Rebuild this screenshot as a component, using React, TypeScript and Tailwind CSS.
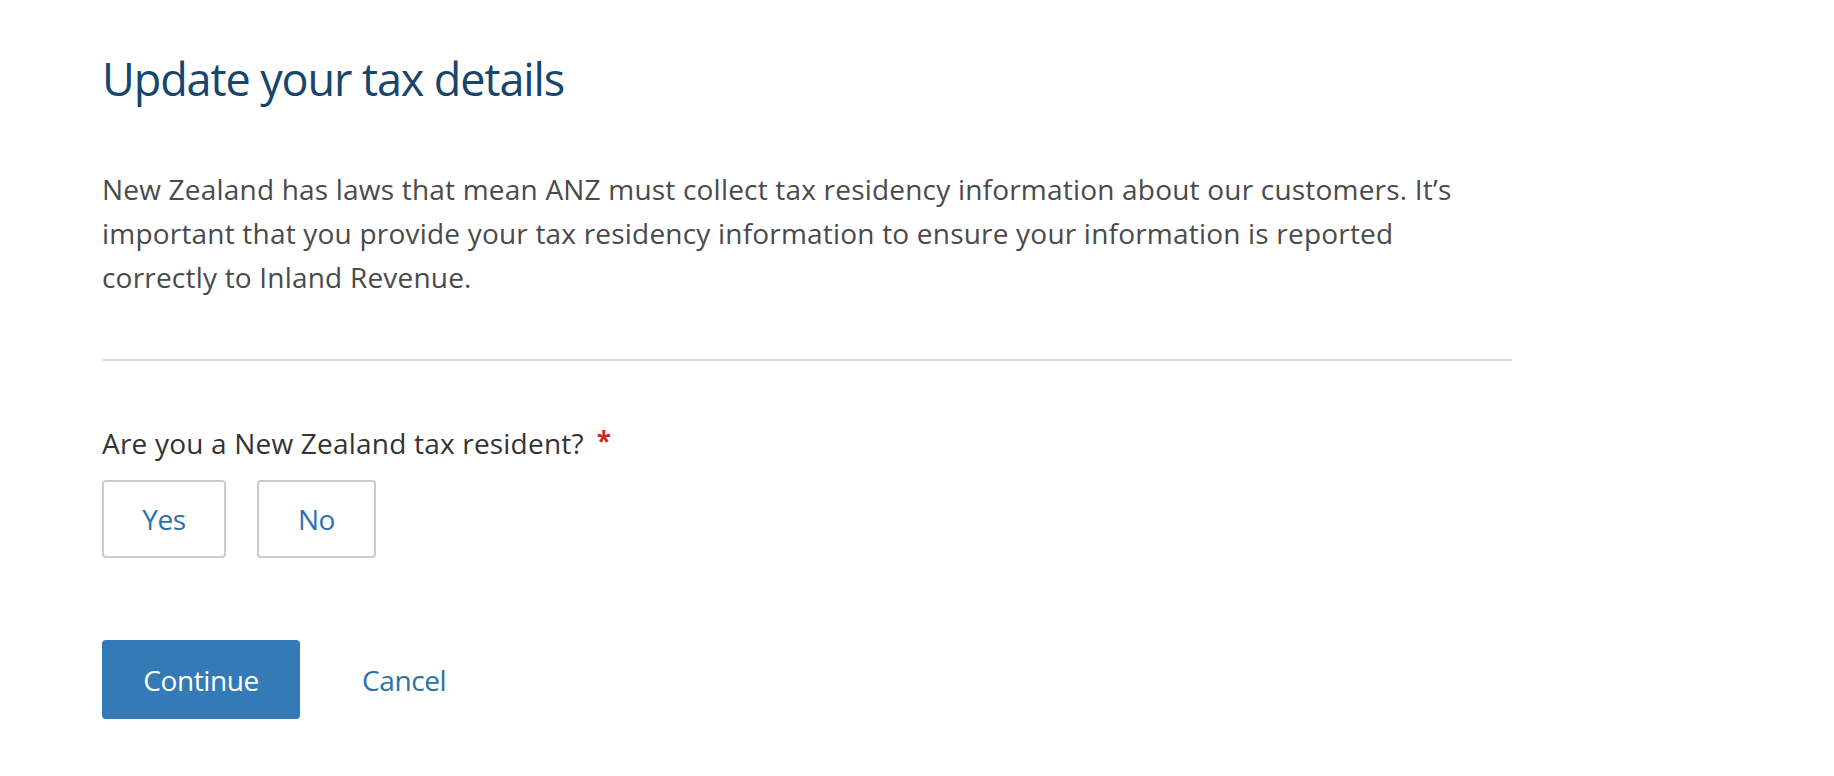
import React from "react";

export default function App() {
  const font = { fontFamily: '"Open Sans", "Noto Sans", sans-serif' };
  return (
    <div className="min-h-screen bg-white" style={font}>
      <div className="pl-[102px] pt-[51px] w-[1512px]">
        <h1 className="text-[45px] leading-[56px] font-normal text-[#17456b] tracking-[-1.1px]">
          Update your tax details
        </h1>
        <p className="mt-[60px] w-[1385px] text-[28px] leading-[44px] text-[#4a4a4a] tracking-[0.2px]">
          New Zealand has laws that mean ANZ must collect tax residency information about our customers. It’s important
          that you provide your tax residency information to ensure your information is reported correctly to Inland
          Revenue.
        </p>
        <div className="mt-[60px] h-[2px] bg-[#d6dee6]" />
        <div className="mt-[60px] text-[28px] leading-[44px] text-[#333333] tracking-[0.2px] flex items-start">
          <span>Are you a New Zealand tax resident?</span>
          <span className="text-[#d0281f] font-bold text-[26px] leading-[40px] ml-[13px]">*</span>
        </div>
        <div className="mt-[15px] flex gap-[31px]">
          <button className="w-[124px] h-[78px] border-2 border-[#cccccc] rounded-[4px] bg-white text-[28px] text-[#2c71ab] tracking-[-0.4px]">
            Yes
          </button>
          <button className="w-[119px] h-[78px] border-2 border-[#cccccc] rounded-[4px] bg-white text-[28px] text-[#2c71ab] tracking-[-0.4px]">
            No
          </button>
        </div>
        <div className="mt-[82px] flex items-center gap-[62px]">
          <button className="w-[198px] h-[79px] rounded-[4px] bg-[#337ab7] text-white text-[28px] tracking-[-0.4px]">
            Continue
          </button>
          <a className="text-[28px] text-[#2c71ab] tracking-[-0.4px] cursor-pointer">Cancel</a>
        </div>
      </div>
    </div>
  );
}
